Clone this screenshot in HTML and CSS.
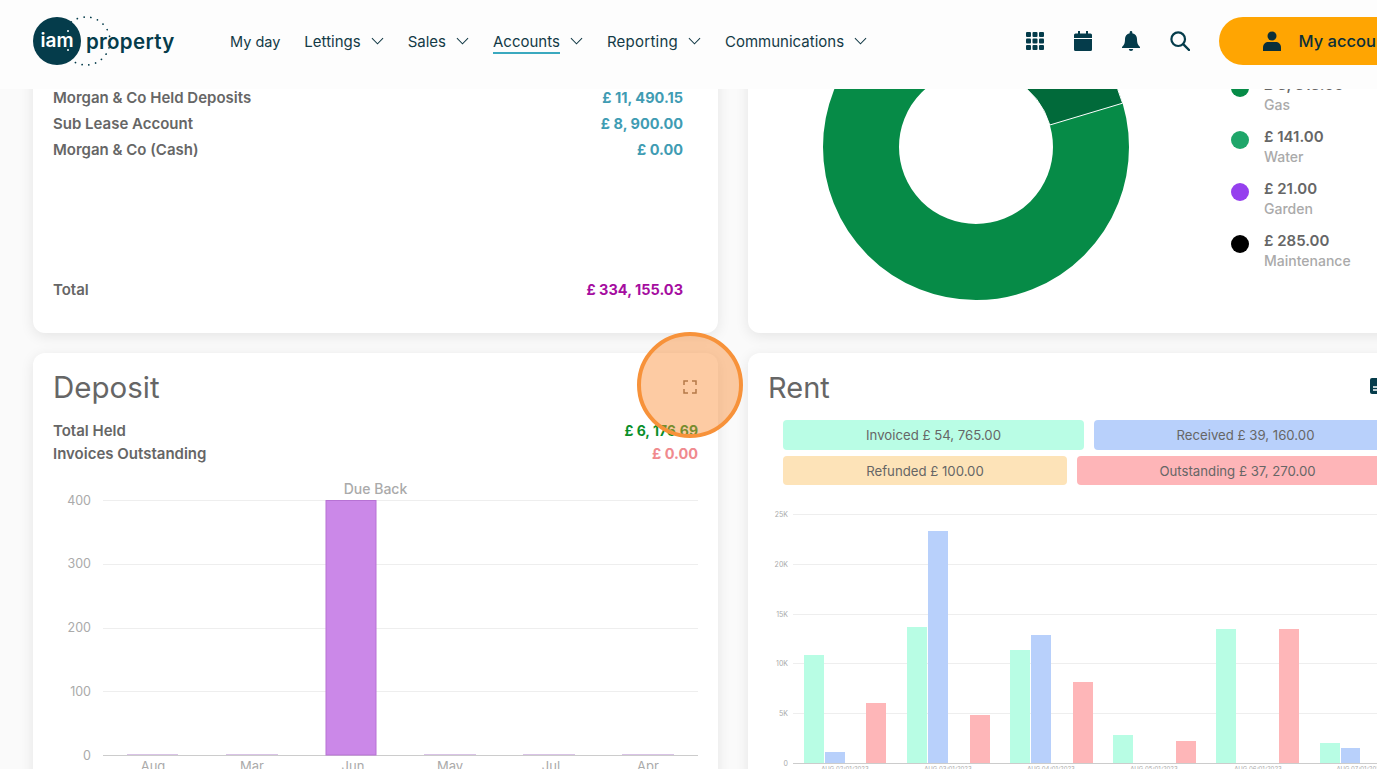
FILE: index.html
```html
<!DOCTYPE html>
<html lang="en">
<head>
<meta charset="utf-8">
<title>iam property</title>
<link rel="stylesheet" href="styles.css">
</head>
<body>
<header class="topbar">
  <a class="logo" aria-label="iam property">
    <svg class="logo-mark" width="102" height="68" viewBox="0 0 102 68">
      <circle cx="53" cy="34" r="24" fill="none" stroke="#053c4b" stroke-width="1.7" stroke-linecap="round" stroke-dasharray="0.1 6.8"/>
      <circle cx="24" cy="34" r="24" fill="#053c4b"/>
      <text x="24" y="40" class="logo-iam">iam</text>
      <circle cx="35" cy="24" r="1" fill="#fff"/>
      <circle cx="35" cy="43" r="1" fill="#fff"/>
    </svg>
    <span class="logo-word">property</span>
  </a>
  <nav class="nav">
    <a class="nav-item nav-first">My day</a>
    <a class="nav-item">Lettings<svg class="chev" viewBox="0 0 14 8"><path d="M1 1l6 6 6-6"/></svg></a>
    <a class="nav-item">Sales<svg class="chev" viewBox="0 0 14 8"><path d="M1 1l6 6 6-6"/></svg></a>
    <a class="nav-item"><span class="nav-active">Accounts</span><svg class="chev" viewBox="0 0 14 8"><path d="M1 1l6 6 6-6"/></svg></a>
    <a class="nav-item nav-wide">Reporting<svg class="chev" viewBox="0 0 14 8"><path d="M1 1l6 6 6-6"/></svg></a>
    <a class="nav-item">Communications<svg class="chev" viewBox="0 0 14 8"><path d="M1 1l6 6 6-6"/></svg></a>
  </nav>
  <div class="tools">
    <svg class="tool" viewBox="0 0 18 18"><g fill="#053c4b"><rect x="0" y="0" width="5" height="5" rx="1"/><rect x="6.500" y="0" width="5" height="5" rx="1"/><rect x="13" y="0" width="5" height="5" rx="1"/><rect x="0" y="6.500" width="5" height="5" rx="1"/><rect x="6.500" y="6.500" width="5" height="5" rx="1"/><rect x="13" y="6.500" width="5" height="5" rx="1"/><rect x="0" y="13" width="5" height="5" rx="1"/><rect x="6.500" y="13" width="5" height="5" rx="1"/><rect x="13" y="13" width="5" height="5" rx="1"/></g></svg>
    <svg class="tool" viewBox="0 0 18 20"><path fill="#053c4b" d="M4 0h2v2.500h6V0h2v2.500h2.500A1.500 1.500 0 0 1 18 4v3H0V4a1.500 1.500 0 0 1 1.500-1.500H4zM0 8h18v10.500A1.500 1.500 0 0 1 16.500 20h-15A1.500 1.500 0 0 1 0 18.500z"/></svg>
    <svg class="tool" viewBox="0 0 18 20"><path fill="#053c4b" d="M9 0a1.300 1.300 0 0 1 1.300 1.300v.9C13.300 2.800 15 5.200 15 8c0 4.500 1 6 3 8v1H0v-1c2-2 3-3.500 3-8 0-2.800 1.700-5.200 4.700-5.800v-.9A1.300 1.300 0 0 1 9 0zM6.800 18h4.400A2.200 2.200 0 0 1 9 20a2.200 2.200 0 0 1-2.200-2z"/></svg>
    <svg class="tool tool-search" viewBox="0 0 20 20"><circle cx="8.200" cy="8.200" r="6.800" fill="none" stroke="#053c4b" stroke-width="2.200"/><path d="M13.200 13.200L19 19" stroke="#053c4b" stroke-width="2.400" stroke-linecap="round"/></svg>
  </div>
  <a class="account">
    <svg class="account-icon" viewBox="0 0 18 20"><circle cx="9" cy="5" r="4.500" fill="#0a2f3a"/><path fill="#0a2f3a" d="M0 20v-3.500C0 13 2.500 11 5.500 11h7c3 0 5.500 2 5.500 5.500V20z"/></svg>
    <span>My account</span>
  </a>
</header>

<main class="viewport">
  <div class="dashboard">
    <section class="card card-balances">
      <ul class="rows">
        <li class="row"><span>Morgan &amp; Co Held Deposits</span><b class="teal">£ 11, 490.15</b></li>
        <li class="row"><span>Sub Lease Account</span><b class="teal">£ 8, 900.00</b></li>
        <li class="row"><span>Morgan &amp; Co (Cash)</span><b class="teal">£ 0.00</b></li>
      </ul>
      <div class="row total"><span>Total</span><b class="magenta">£ 334, 155.03</b></div>
    </section>

    <section class="card card-donut">
      <svg class="donut" width="320" height="320" viewBox="-160 -160 320 320">
        <circle r="115" fill="none" stroke="#068b47" stroke-width="76"/>
        <path fill="#016a3a" stroke="#fff" stroke-width="1" d="M73.800 -22L146.600 -43.800A153 153 0 0 0 76.500 -132.500L38.500 -66.700A77 77 0 0 1 73.800 -22z"/>
      </svg>
      <ul class="legend">
        <li class="legend-item"><i class="dot dot-gas"></i><div><b>£ 3, 313.00</b><span>Gas</span></div></li>
        <li class="legend-item"><i class="dot dot-water"></i><div><b>£ 141.00</b><span>Water</span></div></li>
        <li class="legend-item"><i class="dot dot-garden"></i><div><b>£ 21.00</b><span>Garden</span></div></li>
        <li class="legend-item"><i class="dot dot-maint"></i><div><b>£ 285.00</b><span>Maintenance</span></div></li>
      </ul>
    </section>

    <section class="card card-deposit">
      <div class="card-head">
        <h2>Deposit</h2>
        <svg class="expand" viewBox="0 0 14 14"><path d="M1 5V1h4M9 1h4v4M13 9v4H9M5 13H1V9"/></svg>
      </div>
      <div class="row row-wide"><span>Total Held</span><b class="green">£ 6, 176.69</b></div>
      <div class="row row-wide"><span>Invoices Outstanding</span><b class="red">£ 0.00</b></div>
      <svg class="chart chart-deposit" width="685" height="290" viewBox="33 479 685 290">
        <g class="grid">
          <path d="M103 500.500H698M103 564.500H698M103 628.500H698M103 691.500H698"/>
        </g>
        <path class="axis" d="M103 755.500H698"/>
        <g class="small-bars">
          <rect x="127" y="754" width="51" height="1"/><rect x="226" y="754" width="52" height="1"/><rect x="424" y="754" width="52" height="1"/><rect x="523" y="754" width="52" height="1"/><rect x="622" y="754" width="52" height="1"/>
        </g>
        <rect class="bar-due" x="326" y="500.500" width="50" height="254.500"/>
        <text class="chart-title" x="375.500" y="494">Due Back</text>
        <g class="y-labels">
          <text x="91" y="505">400</text><text x="91" y="568">300</text><text x="91" y="632">200</text><text x="91" y="696">100</text><text x="91" y="760">0</text>
        </g>
        <g class="x-labels">
          <text x="153" y="771">Aug</text><text x="252" y="771">Mar</text><text x="353" y="771">Jun</text><text x="450" y="771">May</text><text x="551" y="771">Jul</text><text x="648" y="771">Apr</text>
        </g>
      </svg>
    </section>

    <section class="card card-rent">
      <div class="card-head">
        <h2>Rent</h2>
      </div>
      <svg class="rent-icon" viewBox="0 0 16 16"><rect width="16" height="16" rx="2" fill="#053c4b"/><path d="M3 9h10M3 12h10" stroke="#fff" stroke-width="1.300"/></svg>
      <div class="pills pills-top">
        <div class="pill pill-inv">Invoiced £ 54, 765.00</div>
        <div class="pill pill-rec">Received £ 39, 160.00</div>
      </div>
      <div class="pills pills-bottom">
        <div class="pill pill-ref">Refunded £ 100.00</div>
        <div class="pill pill-out">Outstanding £ 37, 270.00</div>
      </div>
      <svg class="chart chart-rent" width="629" height="279" viewBox="748 490 629 279">
        <path class="grid-rent" d="M793 514.500H1377M793 564.500H1377M793 614.500H1377M793 663.500H1377M793 713.500H1377"/>
        <path class="axis" d="M793 763.500H1377"/>
        <g class="b-mint">
          <rect x="804" y="655" width="20" height="108"/><rect x="907" y="627" width="20" height="136"/><rect x="1010" y="650" width="20" height="113"/><rect x="1113" y="735" width="20" height="28"/><rect x="1216" y="629" width="20" height="134"/><rect x="1320" y="743" width="20" height="20"/>
        </g>
        <g class="b-blue">
          <rect x="825" y="752" width="20" height="11"/><rect x="928" y="531" width="20" height="232"/><rect x="1031" y="635" width="20" height="128"/><rect x="1341" y="748" width="19" height="15"/>
        </g>
        <g class="b-red">
          <rect x="866" y="703" width="20" height="60"/><rect x="970" y="715" width="20" height="48"/><rect x="1073" y="682" width="20" height="81"/><rect x="1176" y="741" width="20" height="22"/><rect x="1279" y="629" width="20" height="134"/>
        </g>
        <g class="rent-y">
          <text x="788" y="517">25K</text><text x="788" y="567">20K</text><text x="788" y="617">15K</text><text x="788" y="666">10K</text><text x="788" y="716">5K</text><text x="788" y="766">0</text>
        </g>
        <g class="rent-x">
          <text x="845" y="771">AUG 02/01/2023</text><text x="948" y="771">AUG 03/01/2023</text><text x="1051" y="771">AUG 04/01/2023</text><text x="1154" y="771">AUG 05/01/2023</text><text x="1258" y="771">AUG 06/01/2023</text><text x="1360" y="771">AUG 07/01/2023</text>
        </g>
      </svg>
    </section>
  </div>
  <div class="pointer" aria-hidden="true"></div>
</main>
</body>
</html>
```
FILE: styles.css
```css
* { box-sizing: border-box; }
html, body { margin: 0; height: 769px; overflow: hidden; }
body {
  width: 1377px;
  background: #fafafa;
  font-family: Inter, "Noto Sans", sans-serif;
  color: #666;
}
ul { list-style: none; margin: 0; padding: 0; }
h2 { margin: 0; font-weight: 400; }

.topbar {
  position: relative;
  z-index: 2;
  height: 89px;
  width: 1600px;
  background: #fdfdfd;
  display: flex;
  align-items: flex-start;
  padding: 17px 0 0 33px;
}
.logo { position: relative; flex: none; display: flex; align-items: center; width: 197px; height: 48px; padding-left: 53px; }
.logo-mark { position: absolute; left: 0; top: -10px; overflow: visible; }
.logo-iam { font: 600 19px Inter, sans-serif; fill: #fff; text-anchor: middle; }
.logo-word { position: relative; font: 600 20.500px Inter, sans-serif; color: #053c4b; letter-spacing: .3px; }
.nav { flex: none; display: flex; gap: 24px; height: 48px; align-items: center; font-size: 15px; color: #133a46; white-space: nowrap; }
.nav-item { display: flex; align-items: center; gap: 10px; }
.nav-first { font-size: 14.500px; }
.nav-wide { letter-spacing: .25px; }
.nav-active { border-bottom: 2px solid #3aa9bf; padding-bottom: 1px; margin-bottom: -3px; }
.chev { width: 13px; height: 8px; fill: none; stroke: #133a46; stroke-width: 1.100; }
.tools { flex: none; display: flex; gap: 30px; align-items: center; height: 48px; margin-left: 158.500px; }
.tool { width: 18px; height: 20px; }
.tool-search { width: 20px; margin-right: -1px; }
.account {
  flex: none;
  margin-left: 30px;
  width: 280px;
  height: 48px;
  border-radius: 24px;
  background: #ffa502;
  display: flex;
  align-items: center;
  padding-left: 44px;
  gap: 18px;
  font-size: 16.500px;
  font-weight: 500;
  color: #0a2f3a;
  white-space: nowrap;
}
.account-icon { width: 18px; height: 20px; }

.viewport { position: relative; height: 680px; overflow: hidden; }
.dashboard {
  display: grid;
  grid-template-columns: 685px 700px;
  grid-template-rows: 320px 500px;
  column-gap: 30px;
  row-gap: 20px;
  margin: -76px 0 0 33px;
}
.card {
  position: relative;
  background: #fff;
  border-radius: 12px;
  box-shadow: 0 3px 14px rgba(0, 0, 0, .09);
}
.card-balances { padding: 72px 35px 0 20px; display: flex; flex-direction: column; }
.rows { display: flex; flex-direction: column; }
.row { display: flex; justify-content: space-between; font-size: 14.500px; line-height: 26px; font-weight: 600; color: #666; }
.row span { font-size: 15px; }
.row b { font-weight: 700; }
.total { margin-top: 114px; }
.teal { color: #3f9cb3; }
.magenta { color: #a50da0; }
.green { color: #098f2a; font-size: 14px; }
.red { color: #f08a8e; }

.card-donut { display: flex; align-items: flex-start; padding-left: 68px; }
.donut { flex: none; margin-top: -26px; }
.legend { margin: 62px 0 0 95px; display: flex; flex-direction: column; gap: 12px; }
.legend-item { display: flex; gap: 15px; align-items: flex-start; height: 40px; }
.dot { width: 18px; height: 18px; margin-top: 4px; border-radius: 50%; flex: none; }
.dot-gas { background: #068b47; }
.dot-water { background: #1fa66a; }
.dot-garden { background: #9540ee; }
.dot-maint { background: #000; }
.legend-item b { display: block; font-size: 15px; font-weight: 600; color: #666; line-height: 20px; }
.legend-item span { display: block; font-size: 14px; font-weight: 500; color: #aaa; line-height: 20px; }

.card-head { display: flex; justify-content: space-between; align-items: center; padding: 2px 20px 0; height: 66px; }
.card-head h2 { font-size: 29.500px; color: #666; }
.card-rent h2 { font-size: 29px; }
.expand { width: 14px; height: 14px; margin-right: 1px; fill: none; stroke: #7d6a58; stroke-width: 1.500; }
.row-wide { padding: 0 20px; line-height: 23px; }
.chart { display: block; }
.chart-deposit { margin-top: 14px; }
.grid path { fill: none; stroke: #eee; stroke-width: 1; }
.axis { fill: none; stroke: #ccc; stroke-width: 1; }
.small-bars rect { fill: #d9c3e6; }
.bar-due { fill: #cb88e8; stroke: #b772d4; stroke-width: 1; }
.chart-title { font: 500 14px Inter, sans-serif; fill: #aaa; text-anchor: middle; }
.y-labels text { font: 400 12.500px Inter, sans-serif; fill: #aaa; text-anchor: end; }
.x-labels text { font: 400 13px Inter, sans-serif; fill: #aaa; text-anchor: middle; }

.rent-icon { position: absolute; top: 25px; left: 622px; width: 16px; height: 16px; }
.pills { display: flex; gap: 10px; padding-left: 35px; }
.pills-top { margin-top: 1px; }
.pills-bottom { margin-top: 6px; }
.pill { height: 30px; border-radius: 4px; display: flex; align-items: center; justify-content: center; font-size: 13.200px; font-weight: 400; color: #666; }
.pill-inv { width: 301px; background: #b9fde5; }
.pill-rec { width: 303px; background: #b8d0fb; }
.pill-ref { width: 284px; height: 29px; background: #fde3b8; }
.pill-out { width: 321px; height: 29px; background: #feb5b8; }
.chart-rent { margin-top: 5px; }
.grid-rent { fill: none; stroke: #eee; stroke-width: 1; }
.b-mint rect { fill: #b8fde4; }
.b-blue rect { fill: #b8d0fb; }
.b-red rect { fill: #feb6b8; }
.rent-y text { font: 400 7px Inter, sans-serif; fill: #aaa; text-anchor: end; }
.rent-x text { font: 400 6px Inter, sans-serif; fill: #aaa; text-anchor: middle; }

.pointer {
  position: absolute;
  left: 637px;
  top: 243px;
  width: 106px;
  height: 106px;
  border-radius: 50%;
  background: rgba(251, 140, 50, .45);
  border: 4px solid #f7923a;
}
```
